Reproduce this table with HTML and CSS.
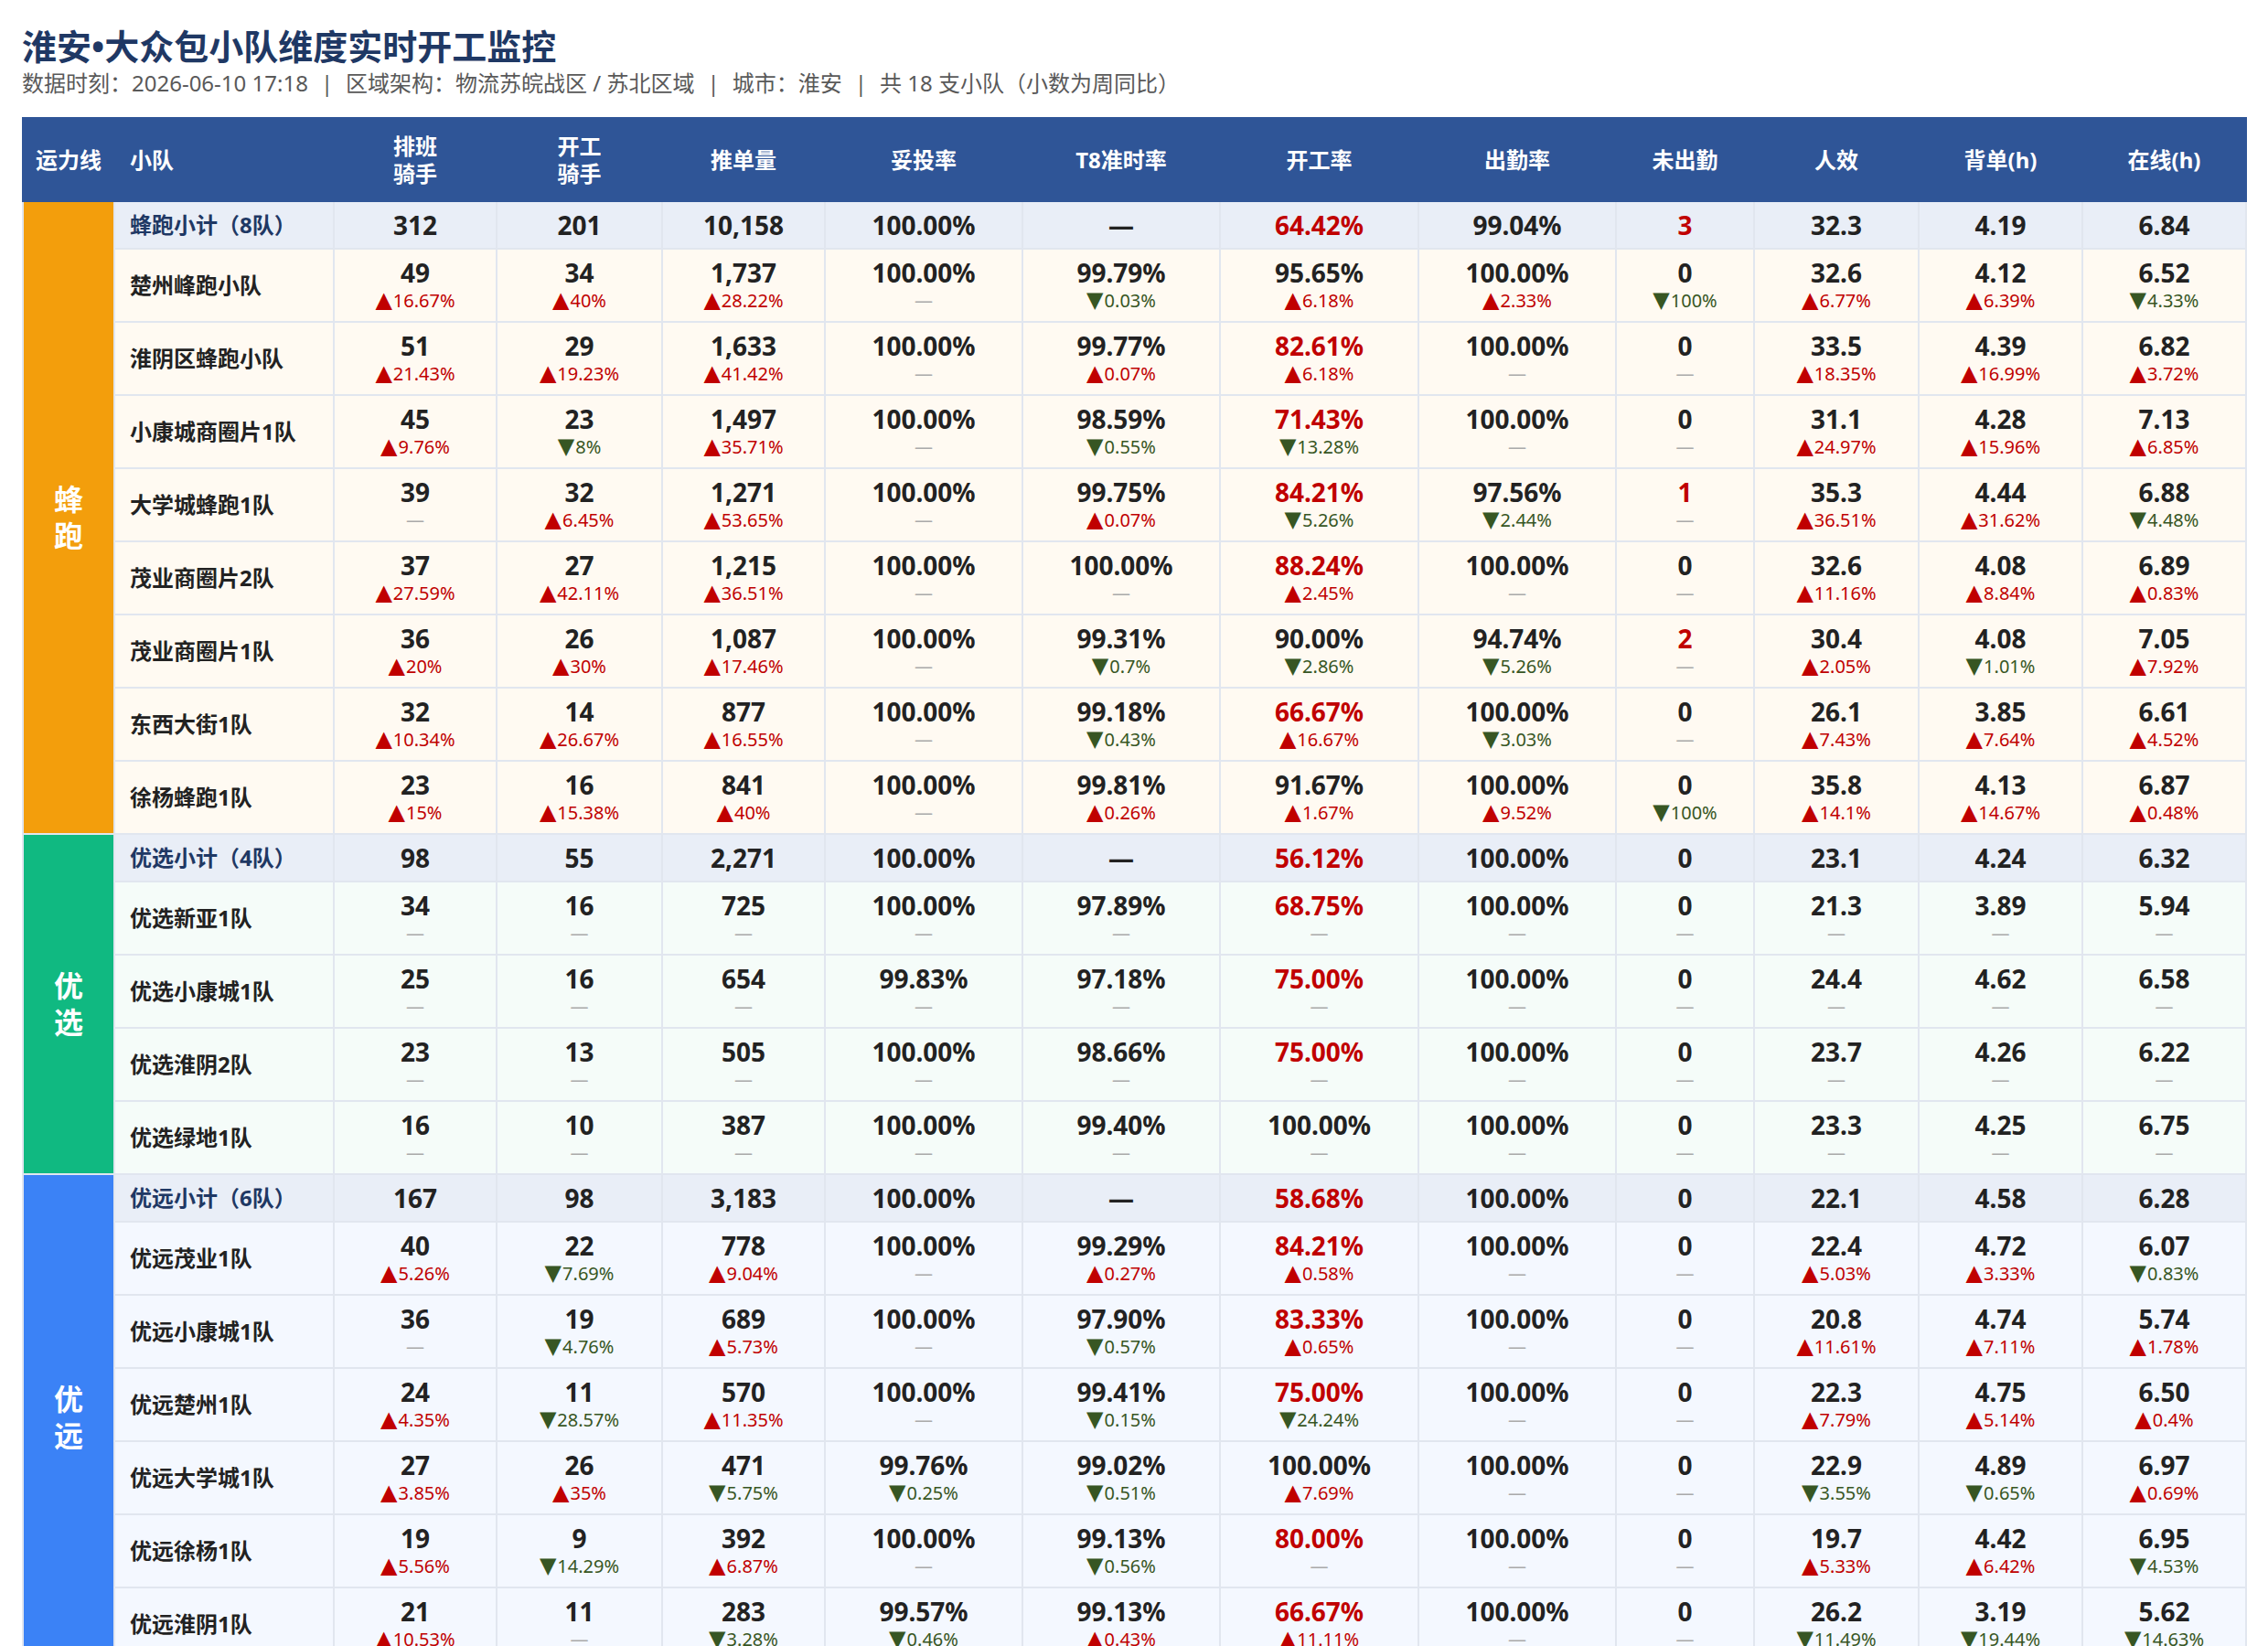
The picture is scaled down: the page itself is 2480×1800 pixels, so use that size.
FILE: index.html
```html
<!DOCTYPE html>
<html lang="zh-CN">
<head>
<meta charset="utf-8">
<title>淮安•大众包小队维度实时开工监控</title>
<link rel="stylesheet" href="styles.css">
</head>
<body>
<header class="page-head">
  <h1 class="title">淮安•大众包小队维度实时开工监控</h1>
  <p class="meta">数据时刻：2026-06-10 17:18<span class="sep">|</span>区域架构：物流苏皖战区 / 苏北区域<span class="sep">|</span>城市：淮安<span class="sep">|</span>共 18 支小队（小数为周同比）</p>
</header>
<table class="grid">
  <colgroup>
    <col class="w-line"><col class="w-team"><col class="w-a"><col class="w-b"><col class="w-a"><col class="w-c"><col class="w-c"><col class="w-d"><col class="w-c"><col class="w-e"><col class="w-f"><col class="w-g"><col class="w-g">
  </colgroup>
  <thead>
    <tr class="head">
      <th>运力线</th><th class="th-team">小队</th><th>排班<br>骑手</th><th>开工<br>骑手</th><th>推单量</th><th>妥投率</th><th>T8准时率</th><th>开工率</th><th>出勤率</th><th>未出勤</th><th>人效</th><th>背单(h)</th><th>在线(h)</th>
    </tr>
  </thead>
  <tbody>
    <tr class="sub">
      <td class="line fp" rowspan="9">蜂<br>跑</td>
      <td class="team">蜂跑小计（8队）</td>
      <td><span class="v">312</span></td><td><span class="v">201</span></td><td><span class="v">10,158</span></td><td><span class="v">100.00%</span></td><td><span class="v">—</span></td><td><span class="v red">64.42%</span></td><td><span class="v">99.04%</span></td><td><span class="v red">3</span></td><td><span class="v">32.3</span></td><td><span class="v">4.19</span></td><td><span class="v">6.84</span></td>
    </tr>
    <tr class="row fp">
      <td class="team">楚州峰跑小队</td>
      <td><span class="v">49</span><span class="d up"><span class="t">▲</span>16.67%</span></td>
      <td><span class="v">34</span><span class="d up"><span class="t">▲</span>40%</span></td>
      <td><span class="v">1,737</span><span class="d up"><span class="t">▲</span>28.22%</span></td>
      <td><span class="v">100.00%</span><span class="d nil">—</span></td>
      <td><span class="v">99.79%</span><span class="d dn"><span class="t">▼</span>0.03%</span></td>
      <td><span class="v">95.65%</span><span class="d up"><span class="t">▲</span>6.18%</span></td>
      <td><span class="v">100.00%</span><span class="d up"><span class="t">▲</span>2.33%</span></td>
      <td><span class="v">0</span><span class="d dn"><span class="t">▼</span>100%</span></td>
      <td><span class="v">32.6</span><span class="d up"><span class="t">▲</span>6.77%</span></td>
      <td><span class="v">4.12</span><span class="d up"><span class="t">▲</span>6.39%</span></td>
      <td><span class="v">6.52</span><span class="d dn"><span class="t">▼</span>4.33%</span></td>
    </tr>
    <tr class="row fp">
      <td class="team">淮阴区蜂跑小队</td>
      <td><span class="v">51</span><span class="d up"><span class="t">▲</span>21.43%</span></td>
      <td><span class="v">29</span><span class="d up"><span class="t">▲</span>19.23%</span></td>
      <td><span class="v">1,633</span><span class="d up"><span class="t">▲</span>41.42%</span></td>
      <td><span class="v">100.00%</span><span class="d nil">—</span></td>
      <td><span class="v">99.77%</span><span class="d up"><span class="t">▲</span>0.07%</span></td>
      <td><span class="v red">82.61%</span><span class="d up"><span class="t">▲</span>6.18%</span></td>
      <td><span class="v">100.00%</span><span class="d nil">—</span></td>
      <td><span class="v">0</span><span class="d nil">—</span></td>
      <td><span class="v">33.5</span><span class="d up"><span class="t">▲</span>18.35%</span></td>
      <td><span class="v">4.39</span><span class="d up"><span class="t">▲</span>16.99%</span></td>
      <td><span class="v">6.82</span><span class="d up"><span class="t">▲</span>3.72%</span></td>
    </tr>
    <tr class="row fp">
      <td class="team">小康城商圈片1队</td>
      <td><span class="v">45</span><span class="d up"><span class="t">▲</span>9.76%</span></td>
      <td><span class="v">23</span><span class="d dn"><span class="t">▼</span>8%</span></td>
      <td><span class="v">1,497</span><span class="d up"><span class="t">▲</span>35.71%</span></td>
      <td><span class="v">100.00%</span><span class="d nil">—</span></td>
      <td><span class="v">98.59%</span><span class="d dn"><span class="t">▼</span>0.55%</span></td>
      <td><span class="v red">71.43%</span><span class="d dn"><span class="t">▼</span>13.28%</span></td>
      <td><span class="v">100.00%</span><span class="d nil">—</span></td>
      <td><span class="v">0</span><span class="d nil">—</span></td>
      <td><span class="v">31.1</span><span class="d up"><span class="t">▲</span>24.97%</span></td>
      <td><span class="v">4.28</span><span class="d up"><span class="t">▲</span>15.96%</span></td>
      <td><span class="v">7.13</span><span class="d up"><span class="t">▲</span>6.85%</span></td>
    </tr>
    <tr class="row fp">
      <td class="team">大学城蜂跑1队</td>
      <td><span class="v">39</span><span class="d nil">—</span></td>
      <td><span class="v">32</span><span class="d up"><span class="t">▲</span>6.45%</span></td>
      <td><span class="v">1,271</span><span class="d up"><span class="t">▲</span>53.65%</span></td>
      <td><span class="v">100.00%</span><span class="d nil">—</span></td>
      <td><span class="v">99.75%</span><span class="d up"><span class="t">▲</span>0.07%</span></td>
      <td><span class="v red">84.21%</span><span class="d dn"><span class="t">▼</span>5.26%</span></td>
      <td><span class="v">97.56%</span><span class="d dn"><span class="t">▼</span>2.44%</span></td>
      <td><span class="v red">1</span><span class="d nil">—</span></td>
      <td><span class="v">35.3</span><span class="d up"><span class="t">▲</span>36.51%</span></td>
      <td><span class="v">4.44</span><span class="d up"><span class="t">▲</span>31.62%</span></td>
      <td><span class="v">6.88</span><span class="d dn"><span class="t">▼</span>4.48%</span></td>
    </tr>
    <tr class="row fp">
      <td class="team">茂业商圈片2队</td>
      <td><span class="v">37</span><span class="d up"><span class="t">▲</span>27.59%</span></td>
      <td><span class="v">27</span><span class="d up"><span class="t">▲</span>42.11%</span></td>
      <td><span class="v">1,215</span><span class="d up"><span class="t">▲</span>36.51%</span></td>
      <td><span class="v">100.00%</span><span class="d nil">—</span></td>
      <td><span class="v">100.00%</span><span class="d nil">—</span></td>
      <td><span class="v red">88.24%</span><span class="d up"><span class="t">▲</span>2.45%</span></td>
      <td><span class="v">100.00%</span><span class="d nil">—</span></td>
      <td><span class="v">0</span><span class="d nil">—</span></td>
      <td><span class="v">32.6</span><span class="d up"><span class="t">▲</span>11.16%</span></td>
      <td><span class="v">4.08</span><span class="d up"><span class="t">▲</span>8.84%</span></td>
      <td><span class="v">6.89</span><span class="d up"><span class="t">▲</span>0.83%</span></td>
    </tr>
    <tr class="row fp">
      <td class="team">茂业商圈片1队</td>
      <td><span class="v">36</span><span class="d up"><span class="t">▲</span>20%</span></td>
      <td><span class="v">26</span><span class="d up"><span class="t">▲</span>30%</span></td>
      <td><span class="v">1,087</span><span class="d up"><span class="t">▲</span>17.46%</span></td>
      <td><span class="v">100.00%</span><span class="d nil">—</span></td>
      <td><span class="v">99.31%</span><span class="d dn"><span class="t">▼</span>0.7%</span></td>
      <td><span class="v">90.00%</span><span class="d dn"><span class="t">▼</span>2.86%</span></td>
      <td><span class="v">94.74%</span><span class="d dn"><span class="t">▼</span>5.26%</span></td>
      <td><span class="v red">2</span><span class="d nil">—</span></td>
      <td><span class="v">30.4</span><span class="d up"><span class="t">▲</span>2.05%</span></td>
      <td><span class="v">4.08</span><span class="d dn"><span class="t">▼</span>1.01%</span></td>
      <td><span class="v">7.05</span><span class="d up"><span class="t">▲</span>7.92%</span></td>
    </tr>
    <tr class="row fp">
      <td class="team">东西大街1队</td>
      <td><span class="v">32</span><span class="d up"><span class="t">▲</span>10.34%</span></td>
      <td><span class="v">14</span><span class="d up"><span class="t">▲</span>26.67%</span></td>
      <td><span class="v">877</span><span class="d up"><span class="t">▲</span>16.55%</span></td>
      <td><span class="v">100.00%</span><span class="d nil">—</span></td>
      <td><span class="v">99.18%</span><span class="d dn"><span class="t">▼</span>0.43%</span></td>
      <td><span class="v red">66.67%</span><span class="d up"><span class="t">▲</span>16.67%</span></td>
      <td><span class="v">100.00%</span><span class="d dn"><span class="t">▼</span>3.03%</span></td>
      <td><span class="v">0</span><span class="d nil">—</span></td>
      <td><span class="v">26.1</span><span class="d up"><span class="t">▲</span>7.43%</span></td>
      <td><span class="v">3.85</span><span class="d up"><span class="t">▲</span>7.64%</span></td>
      <td><span class="v">6.61</span><span class="d up"><span class="t">▲</span>4.52%</span></td>
    </tr>
    <tr class="row fp">
      <td class="team">徐杨蜂跑1队</td>
      <td><span class="v">23</span><span class="d up"><span class="t">▲</span>15%</span></td>
      <td><span class="v">16</span><span class="d up"><span class="t">▲</span>15.38%</span></td>
      <td><span class="v">841</span><span class="d up"><span class="t">▲</span>40%</span></td>
      <td><span class="v">100.00%</span><span class="d nil">—</span></td>
      <td><span class="v">99.81%</span><span class="d up"><span class="t">▲</span>0.26%</span></td>
      <td><span class="v">91.67%</span><span class="d up"><span class="t">▲</span>1.67%</span></td>
      <td><span class="v">100.00%</span><span class="d up"><span class="t">▲</span>9.52%</span></td>
      <td><span class="v">0</span><span class="d dn"><span class="t">▼</span>100%</span></td>
      <td><span class="v">35.8</span><span class="d up"><span class="t">▲</span>14.1%</span></td>
      <td><span class="v">4.13</span><span class="d up"><span class="t">▲</span>14.67%</span></td>
      <td><span class="v">6.87</span><span class="d up"><span class="t">▲</span>0.48%</span></td>
    </tr>

    <tr class="sub">
      <td class="line yx" rowspan="5">优<br>选</td>
      <td class="team">优选小计（4队）</td>
      <td><span class="v">98</span></td><td><span class="v">55</span></td><td><span class="v">2,271</span></td><td><span class="v">100.00%</span></td><td><span class="v">—</span></td><td><span class="v red">56.12%</span></td><td><span class="v">100.00%</span></td><td><span class="v">0</span></td><td><span class="v">23.1</span></td><td><span class="v">4.24</span></td><td><span class="v">6.32</span></td>
    </tr>
    <tr class="row yx">
      <td class="team">优选新亚1队</td>
      <td><span class="v">34</span><span class="d nil">—</span></td>
      <td><span class="v">16</span><span class="d nil">—</span></td>
      <td><span class="v">725</span><span class="d nil">—</span></td>
      <td><span class="v">100.00%</span><span class="d nil">—</span></td>
      <td><span class="v">97.89%</span><span class="d nil">—</span></td>
      <td><span class="v red">68.75%</span><span class="d nil">—</span></td>
      <td><span class="v">100.00%</span><span class="d nil">—</span></td>
      <td><span class="v">0</span><span class="d nil">—</span></td>
      <td><span class="v">21.3</span><span class="d nil">—</span></td>
      <td><span class="v">3.89</span><span class="d nil">—</span></td>
      <td><span class="v">5.94</span><span class="d nil">—</span></td>
    </tr>
    <tr class="row yx">
      <td class="team">优选小康城1队</td>
      <td><span class="v">25</span><span class="d nil">—</span></td>
      <td><span class="v">16</span><span class="d nil">—</span></td>
      <td><span class="v">654</span><span class="d nil">—</span></td>
      <td><span class="v">99.83%</span><span class="d nil">—</span></td>
      <td><span class="v">97.18%</span><span class="d nil">—</span></td>
      <td><span class="v red">75.00%</span><span class="d nil">—</span></td>
      <td><span class="v">100.00%</span><span class="d nil">—</span></td>
      <td><span class="v">0</span><span class="d nil">—</span></td>
      <td><span class="v">24.4</span><span class="d nil">—</span></td>
      <td><span class="v">4.62</span><span class="d nil">—</span></td>
      <td><span class="v">6.58</span><span class="d nil">—</span></td>
    </tr>
    <tr class="row yx">
      <td class="team">优选淮阴2队</td>
      <td><span class="v">23</span><span class="d nil">—</span></td>
      <td><span class="v">13</span><span class="d nil">—</span></td>
      <td><span class="v">505</span><span class="d nil">—</span></td>
      <td><span class="v">100.00%</span><span class="d nil">—</span></td>
      <td><span class="v">98.66%</span><span class="d nil">—</span></td>
      <td><span class="v red">75.00%</span><span class="d nil">—</span></td>
      <td><span class="v">100.00%</span><span class="d nil">—</span></td>
      <td><span class="v">0</span><span class="d nil">—</span></td>
      <td><span class="v">23.7</span><span class="d nil">—</span></td>
      <td><span class="v">4.26</span><span class="d nil">—</span></td>
      <td><span class="v">6.22</span><span class="d nil">—</span></td>
    </tr>
    <tr class="row yx">
      <td class="team">优选绿地1队</td>
      <td><span class="v">16</span><span class="d nil">—</span></td>
      <td><span class="v">10</span><span class="d nil">—</span></td>
      <td><span class="v">387</span><span class="d nil">—</span></td>
      <td><span class="v">100.00%</span><span class="d nil">—</span></td>
      <td><span class="v">99.40%</span><span class="d nil">—</span></td>
      <td><span class="v">100.00%</span><span class="d nil">—</span></td>
      <td><span class="v">100.00%</span><span class="d nil">—</span></td>
      <td><span class="v">0</span><span class="d nil">—</span></td>
      <td><span class="v">23.3</span><span class="d nil">—</span></td>
      <td><span class="v">4.25</span><span class="d nil">—</span></td>
      <td><span class="v">6.75</span><span class="d nil">—</span></td>
    </tr>

    <tr class="sub">
      <td class="line yy" rowspan="7">优<br>远</td>
      <td class="team">优远小计（6队）</td>
      <td><span class="v">167</span></td><td><span class="v">98</span></td><td><span class="v">3,183</span></td><td><span class="v">100.00%</span></td><td><span class="v">—</span></td><td><span class="v red">58.68%</span></td><td><span class="v">100.00%</span></td><td><span class="v">0</span></td><td><span class="v">22.1</span></td><td><span class="v">4.58</span></td><td><span class="v">6.28</span></td>
    </tr>
    <tr class="row yy">
      <td class="team">优远茂业1队</td>
      <td><span class="v">40</span><span class="d up"><span class="t">▲</span>5.26%</span></td>
      <td><span class="v">22</span><span class="d dn"><span class="t">▼</span>7.69%</span></td>
      <td><span class="v">778</span><span class="d up"><span class="t">▲</span>9.04%</span></td>
      <td><span class="v">100.00%</span><span class="d nil">—</span></td>
      <td><span class="v">99.29%</span><span class="d up"><span class="t">▲</span>0.27%</span></td>
      <td><span class="v red">84.21%</span><span class="d up"><span class="t">▲</span>0.58%</span></td>
      <td><span class="v">100.00%</span><span class="d nil">—</span></td>
      <td><span class="v">0</span><span class="d nil">—</span></td>
      <td><span class="v">22.4</span><span class="d up"><span class="t">▲</span>5.03%</span></td>
      <td><span class="v">4.72</span><span class="d up"><span class="t">▲</span>3.33%</span></td>
      <td><span class="v">6.07</span><span class="d dn"><span class="t">▼</span>0.83%</span></td>
    </tr>
    <tr class="row yy">
      <td class="team">优远小康城1队</td>
      <td><span class="v">36</span><span class="d nil">—</span></td>
      <td><span class="v">19</span><span class="d dn"><span class="t">▼</span>4.76%</span></td>
      <td><span class="v">689</span><span class="d up"><span class="t">▲</span>5.73%</span></td>
      <td><span class="v">100.00%</span><span class="d nil">—</span></td>
      <td><span class="v">97.90%</span><span class="d dn"><span class="t">▼</span>0.57%</span></td>
      <td><span class="v red">83.33%</span><span class="d up"><span class="t">▲</span>0.65%</span></td>
      <td><span class="v">100.00%</span><span class="d nil">—</span></td>
      <td><span class="v">0</span><span class="d nil">—</span></td>
      <td><span class="v">20.8</span><span class="d up"><span class="t">▲</span>11.61%</span></td>
      <td><span class="v">4.74</span><span class="d up"><span class="t">▲</span>7.11%</span></td>
      <td><span class="v">5.74</span><span class="d up"><span class="t">▲</span>1.78%</span></td>
    </tr>
    <tr class="row yy">
      <td class="team">优远楚州1队</td>
      <td><span class="v">24</span><span class="d up"><span class="t">▲</span>4.35%</span></td>
      <td><span class="v">11</span><span class="d dn"><span class="t">▼</span>28.57%</span></td>
      <td><span class="v">570</span><span class="d up"><span class="t">▲</span>11.35%</span></td>
      <td><span class="v">100.00%</span><span class="d nil">—</span></td>
      <td><span class="v">99.41%</span><span class="d dn"><span class="t">▼</span>0.15%</span></td>
      <td><span class="v red">75.00%</span><span class="d dn"><span class="t">▼</span>24.24%</span></td>
      <td><span class="v">100.00%</span><span class="d nil">—</span></td>
      <td><span class="v">0</span><span class="d nil">—</span></td>
      <td><span class="v">22.3</span><span class="d up"><span class="t">▲</span>7.79%</span></td>
      <td><span class="v">4.75</span><span class="d up"><span class="t">▲</span>5.14%</span></td>
      <td><span class="v">6.50</span><span class="d up"><span class="t">▲</span>0.4%</span></td>
    </tr>
    <tr class="row yy">
      <td class="team">优远大学城1队</td>
      <td><span class="v">27</span><span class="d up"><span class="t">▲</span>3.85%</span></td>
      <td><span class="v">26</span><span class="d up"><span class="t">▲</span>35%</span></td>
      <td><span class="v">471</span><span class="d dn"><span class="t">▼</span>5.75%</span></td>
      <td><span class="v">99.76%</span><span class="d dn"><span class="t">▼</span>0.25%</span></td>
      <td><span class="v">99.02%</span><span class="d dn"><span class="t">▼</span>0.51%</span></td>
      <td><span class="v">100.00%</span><span class="d up"><span class="t">▲</span>7.69%</span></td>
      <td><span class="v">100.00%</span><span class="d nil">—</span></td>
      <td><span class="v">0</span><span class="d nil">—</span></td>
      <td><span class="v">22.9</span><span class="d dn"><span class="t">▼</span>3.55%</span></td>
      <td><span class="v">4.89</span><span class="d dn"><span class="t">▼</span>0.65%</span></td>
      <td><span class="v">6.97</span><span class="d up"><span class="t">▲</span>0.69%</span></td>
    </tr>
    <tr class="row yy">
      <td class="team">优远徐杨1队</td>
      <td><span class="v">19</span><span class="d up"><span class="t">▲</span>5.56%</span></td>
      <td><span class="v">9</span><span class="d dn"><span class="t">▼</span>14.29%</span></td>
      <td><span class="v">392</span><span class="d up"><span class="t">▲</span>6.87%</span></td>
      <td><span class="v">100.00%</span><span class="d nil">—</span></td>
      <td><span class="v">99.13%</span><span class="d dn"><span class="t">▼</span>0.56%</span></td>
      <td><span class="v red">80.00%</span><span class="d nil">—</span></td>
      <td><span class="v">100.00%</span><span class="d nil">—</span></td>
      <td><span class="v">0</span><span class="d nil">—</span></td>
      <td><span class="v">19.7</span><span class="d up"><span class="t">▲</span>5.33%</span></td>
      <td><span class="v">4.42</span><span class="d up"><span class="t">▲</span>6.42%</span></td>
      <td><span class="v">6.95</span><span class="d dn"><span class="t">▼</span>4.53%</span></td>
    </tr>
    <tr class="row yy">
      <td class="team">优远淮阴1队</td>
      <td><span class="v">21</span><span class="d up"><span class="t">▲</span>10.53%</span></td>
      <td><span class="v">11</span><span class="d nil">—</span></td>
      <td><span class="v">283</span><span class="d dn"><span class="t">▼</span>3.28%</span></td>
      <td><span class="v">99.57%</span><span class="d dn"><span class="t">▼</span>0.46%</span></td>
      <td><span class="v">99.13%</span><span class="d up"><span class="t">▲</span>0.43%</span></td>
      <td><span class="v red">66.67%</span><span class="d up"><span class="t">▲</span>11.11%</span></td>
      <td><span class="v">100.00%</span><span class="d nil">—</span></td>
      <td><span class="v">0</span><span class="d nil">—</span></td>
      <td><span class="v">26.2</span><span class="d dn"><span class="t">▼</span>11.49%</span></td>
      <td><span class="v">3.19</span><span class="d dn"><span class="t">▼</span>19.44%</span></td>
      <td><span class="v">5.62</span><span class="d dn"><span class="t">▼</span>14.63%</span></td>
    </tr>
  </tbody>
</table>
</body>
</html>
```

FILE: styles.css
```css
html, body {
  margin: 0;
  background: #ffffff;
}
body {
  padding: 25px 24px 0;
  font-family: "Noto Sans", "Noto Sans CJK SC", sans-serif;
  color: #222222;
}
.page-head {
  margin-bottom: 21px;
}
.title {
  margin: 0;
  font-size: 38px;
  line-height: 50px;
  font-weight: 700;
  color: #1f3864;
}
.meta {
  margin: 0;
  font-size: 24px;
  line-height: 32px;
  color: #595959;
}
.sep {
  margin: 0 14px;
  color: #595959;
}
.grid {
  width: 100%;
  table-layout: fixed;
  border-collapse: collapse;
}
.w-line { width: 100px; }
.w-team { width: 240px; }
.w-a { width: 178px; }
.w-b { width: 181px; }
.w-c { width: 216px; }
.w-d { width: 217px; }
.w-e { width: 151px; }
.w-f { width: 180px; }
.w-g { width: 179px; }

.grid tr.head { height: 91px; }
.grid th {
  padding: 0;
  background: #2f5597;
  border: 2px solid #2f5597;
  color: #ffffff;
  font-size: 24px;
  line-height: 30px;
  font-weight: 700;
  text-align: center;
  vertical-align: middle;
}
.grid th.th-team {
  text-align: left;
  padding-left: 16px;
}
.grid td {
  padding: 0;
  border: 2px solid #e1e6ef;
  text-align: center;
  vertical-align: middle;
}
.grid tr.sub { height: 52px; }
.grid tr.row { height: 80px; }
.grid tr.sub td { background: #e9eef7; }
.grid tr.row.fp td { background: #fffaf2; }
.grid tr.row.yx td { background: #f5fcf9; }
.grid tr.row.yy td { background: #f4f8ff; }

.grid td.line {
  color: #ffffff;
  font-size: 32px;
  line-height: 40px;
  font-weight: 700;
}
.grid td.line.fp { background: #f39e0c; }
.grid td.line.yx { background: #10b981; }
.grid td.line.yy { background: #3b82f6; }

.grid td.team {
  text-align: left;
  padding-left: 16px;
  font-size: 24px;
  line-height: 30px;
  font-weight: 700;
  color: #222222;
}
.grid tr.sub td.team { color: #1f3864; }

.v {
  display: block;
  font-size: 28px;
  line-height: 30px;
  font-weight: 700;
  color: #222222;
}
.v.red { color: #c00000; }
.d {
  display: block;
  margin-top: 4px;
  font-size: 20px;
  line-height: 24px;
  font-weight: 400;
}
.d .t {
  font-family: "DejaVu Sans", sans-serif;
  font-size: 24px;
  line-height: 0;
  margin-right: 1px;
}
.d.up { color: #c00000; }
.d.dn { color: #375623; }
.d.nil { color: #aaaaaa; }
```
